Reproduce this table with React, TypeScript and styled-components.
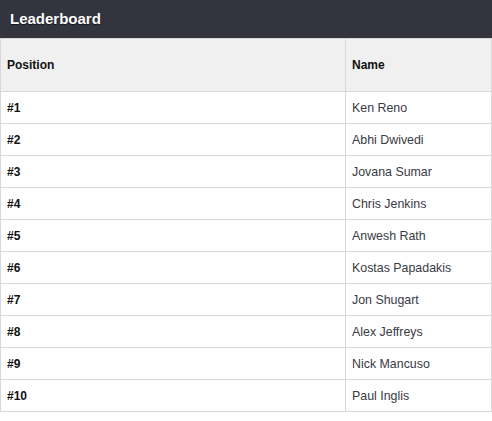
import React from "react";
import styled, { createGlobalStyle } from "styled-components";

const GlobalStyle = createGlobalStyle`
  html, body { margin: 0; padding: 0; background: #ffffff; }
  body { font-family: "Liberation Sans", Arial, Helvetica, sans-serif; }
`;

const Panel = styled.div`
  width: 492px;
  display: flex;
  flex-direction: column;
`;

const TitleBar = styled.div`
  height: 38px;
  background: #33343e;
  display: flex;
  align-items: center;
  padding-left: 10px;
  box-sizing: border-box;
`;

const Title = styled.h1`
  margin: 0;
  font-size: 15px;
  font-weight: 700;
  color: #ffffff;
  text-shadow: 0 1px 1px rgba(0, 0, 0, 0.6);
  line-height: 1;
  padding-bottom: 2px;
`;

const Table = styled.table`
  width: 492px;
  border-collapse: collapse;
  table-layout: fixed;
  font-size: 12px;
`;

const HeadCell = styled.th<{ $w?: number }>`
  width: ${(p) => (p.$w ? `${p.$w}px` : "auto")};
  height: 53px;
  background: #f0f0f0;
  border: 1px solid #d8d8d8;
  text-align: left;
  padding: 0 0 0 6px;
  font-weight: 700;
  color: #111;
  box-sizing: border-box;
`;

const Cell = styled.td<{ $bold?: boolean }>`
  height: 32px;
  border: 1px solid #d8d8d8;
  padding: 0 0 0 6px;
  font-size: ${(p) => (p.$bold ? "12px" : "12.4px")};
  font-weight: ${(p) => (p.$bold ? 700 : 400)};
  color: ${(p) => (p.$bold ? "#111" : "#3a3a44")};
  box-sizing: border-box;
`;

const players = [
  "Ken Reno",
  "Abhi Dwivedi",
  "Jovana Sumar",
  "Chris Jenkins",
  "Anwesh Rath",
  "Kostas Papadakis",
  "Jon Shugart",
  "Alex Jeffreys",
  "Nick Mancuso",
  "Paul Inglis",
];

export default function App() {
  return (
    <>
      <GlobalStyle />
      <Panel>
        <TitleBar>
          <Title>Leaderboard</Title>
        </TitleBar>
        <Table>
          <thead>
            <tr>
              <HeadCell $w={345}>Position</HeadCell>
              <HeadCell>Name</HeadCell>
            </tr>
          </thead>
          <tbody>
            {players.map((name, i) => (
              <tr key={name}>
                <Cell $bold>#{i + 1}</Cell>
                <Cell>{name}</Cell>
              </tr>
            ))}
          </tbody>
        </Table>
      </Panel>
    </>
  );
}
